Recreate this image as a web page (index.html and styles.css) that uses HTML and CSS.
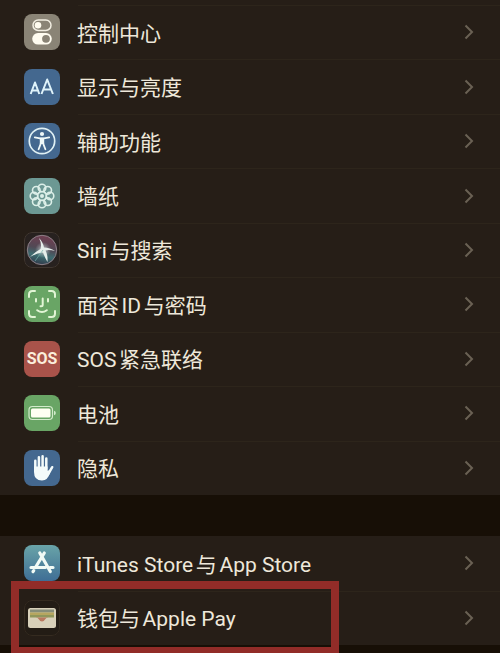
FILE: index.html
```html
<!DOCTYPE html>
<html lang="zh-CN">
<head>
    <meta charset="UTF-8">
    <meta name="viewport" content="width=device-width, initial-scale=1.0">
    <title>设置</title>
    <link rel="stylesheet" href="styles.css">
</head>
<body>
    <svg width="0" height="0" class="defs" aria-hidden="true">
        <symbol id="chevron" viewBox="0 0 10 16">
            <path d="M1.5 1.5 8 8l-6.5 6.5" fill="none" stroke="currentColor" stroke-width="2"/>
        </symbol>
    </svg>
    <main class="settings">
        <ul class="group group-main">
            <li><a class="row" href="#control">
                <svg class="icon gray" viewBox="0 0 36 36">
                    <rect x="9" y="6" width="18" height="10.4" rx="5.2" fill="none" stroke="#f2eee2" stroke-width="1.5"/>
                    <circle cx="14" cy="11.2" r="3.3" fill="#fffcf0"/>
                    <rect x="8.2" y="19" width="19.6" height="11.6" rx="5.8" fill="#fffcf0"/>
                    <circle cx="22" cy="24.8" r="3.9" fill="#8a8476"/>
                </svg>
                <span class="label">控制中心</span>
                <svg class="chevron"><use href="#chevron"/></svg>
            </a></li>
            <li><a class="row" href="#display">
                <svg class="icon blue" viewBox="0 0 36 36">
                    <path d="M6.7 25 11 13.5 15.3 25M8.2 21.5H13.8M17.5 25 23.2 10.5 28.9 25M19.3 20.5H27.1" fill="none" stroke="#dff3fa" stroke-width="2" stroke-linejoin="round"/>
                </svg>
                <span class="label">显示与亮度</span>
                <svg class="chevron"><use href="#chevron"/></svg>
            </a></li>
            <li><a class="row" href="#accessibility">
                <svg class="icon blue" viewBox="0 0 36 36">
                    <circle cx="18" cy="18" r="12.7" fill="none" stroke="#dff0f4" stroke-width="1.7"/>
                    <circle cx="18" cy="11" r="2.1" fill="#eff8f8"/>
                    <path d="M10.8 14.3 16 15.3h4l5.2-1M17 16v4l-2.4 6.2M19 16v4l2.4 6.2" fill="none" stroke="#eff8f8" stroke-width="1.8" stroke-linecap="round"/>
                    <path d="M15.8 14.8h4.4v6.2h-4.4z" fill="#eff8f8"/>
                </svg>
                <span class="label">辅助功能</span>
                <svg class="chevron"><use href="#chevron"/></svg>
            </a></li>
            <li><a class="row" href="#wallpaper">
                <svg class="icon teal" viewBox="0 0 36 36">
                    <g fill="none" stroke="#dcefe8" stroke-width="1.6">
                        <circle cx="18" cy="10" r="3.8"/>
                        <circle cx="23.7" cy="12.3" r="3.8"/>
                        <circle cx="26" cy="18" r="3.8"/>
                        <circle cx="23.7" cy="23.7" r="3.8"/>
                        <circle cx="18" cy="26" r="3.8"/>
                        <circle cx="12.3" cy="23.7" r="3.8"/>
                        <circle cx="10" cy="18" r="3.8"/>
                        <circle cx="12.3" cy="12.3" r="3.8"/>
                        <circle cx="18" cy="18" r="4.5"/>
                    </g>
                    <circle cx="18" cy="18" r="2" fill="#dcefe8"/>
                </svg>
                <span class="label">墙纸</span>
                <svg class="chevron"><use href="#chevron"/></svg>
            </a></li>
            <li><a class="row" href="#siri">
                <svg class="icon" viewBox="0 0 36 36">
                    <defs>
                        <linearGradient id="orb" x1=".6" y1="0" x2=".4" y2="1">
                            <stop offset="0" stop-color="#713d50"/>
                            <stop offset=".45" stop-color="#514955"/>
                            <stop offset=".7" stop-color="#3e6c70"/>
                            <stop offset="1" stop-color="#303a4a"/>
                        </linearGradient>
                        <radialGradient id="glow">
                            <stop offset="0" stop-color="#fff"/>
                            <stop offset="1" stop-color="#c8e0de" stop-opacity="0"/>
                        </radialGradient>
                    </defs>
                    <rect x=".5" y=".5" width="35" height="35" rx="7.5" fill="#27211f" stroke="#403730"/>
                    <circle cx="18" cy="18" r="14.7" fill="url(#orb)" stroke="#8d8088"/>
                    <circle cx="19" cy="18" r="8" fill="url(#glow)" opacity=".7"/>
                    <path d="M15 6Q19 10 20 15.5Q26 15.5 31 19Q25 17.5 21.5 18.5Q24 23 23.5 30Q20.5 25 19 20.5Q13 21 6 25Q11 20 16.5 17Q18 12 15 6Z" fill="#e5eeea"/>
                    <path d="M19 18 11 29" stroke="#73afa8" opacity=".7"/>
                </svg>
                <span class="label">Siri与搜索</span>
                <svg class="chevron"><use href="#chevron"/></svg>
            </a></li>
            <li><a class="row" href="#faceid">
                <svg class="icon green" viewBox="0 0 36 36">
                    <g fill="none" stroke="#e2f5d5" stroke-width="2" stroke-linecap="round">
                        <path d="M5 11V8.5Q5 5 8.5 5H11M25 5h2.5Q31 5 31 8.5V11M31 25v2.5Q31 31 27.5 31H25M11 31H8.5Q5 31 5 27.5V25"/>
                        <path d="M12 13v2.5M24 13v2.5M18.7 12.5v6.2q0 1.5-1.5 1.5h-.7M13.2 24.2q4.8 3.6 9.6 0"/>
                    </g>
                </svg>
                <span class="label">面容ID与密码</span>
                <svg class="chevron"><use href="#chevron"/></svg>
            </a></li>
            <li><a class="row" href="#sos">
                <span class="icon red sos">SOS</span>
                <span class="label">SOS紧急联络</span>
                <svg class="chevron"><use href="#chevron"/></svg>
            </a></li>
            <li><a class="row" href="#battery">
                <svg class="icon green" viewBox="0 0 36 36">
                    <rect x="5" y="11.5" width="23.5" height="13" rx="3.5" fill="none" stroke="#d3ebcb" stroke-width="1.2"/>
                    <rect x="7" y="13.5" width="19.5" height="9" rx="1.5" fill="#fffff2"/>
                    <path d="M30 15.7q1.8.6 1.8 2.3T30 20.3z" fill="#d3ebcb"/>
                </svg>
                <span class="label">电池</span>
                <svg class="chevron"><use href="#chevron"/></svg>
            </a></li>
            <li><a class="row" href="#privacy">
                <svg class="icon blue" viewBox="0 0 36 36">
                    <path d="M11.3 20V10.8M14.9 18V7.3M18.6 18V6.2M22.3 19V8.4M24.5 23.5 28.2 17.2" stroke="#f4fbfa" stroke-width="2.5" stroke-linecap="round"/>
                    <path d="M10 16.5H23.5V20.5H25.5L26.2 22.5Q23.8 30.5 18 30.5Q10 30.5 10 22Z" fill="#f4fbfa"/>
                </svg>
                <span class="label">隐私</span>
                <svg class="chevron"><use href="#chevron"/></svg>
            </a></li>
        </ul>

        <ul class="group group-store">
            <li><a class="row" href="#store">
                <svg class="icon store" viewBox="0 0 36 36">
                    <path d="M15.8 8 26.3 26.5M20.3 8 11.4 22.5M7 22.5H21.2M26 22.5H29M9.7 25.6 9 26.7" stroke="#f1faf5" stroke-width="3.2" stroke-linecap="round"/>
                </svg>
                <span class="label">iTunes Store与App Store</span>
                <svg class="chevron"><use href="#chevron"/></svg>
            </a></li>
            <li class="highlight"><a class="row" href="#wallet">
                <svg class="icon" viewBox="0 0 36 36">
                    <rect x=".5" y=".5" width="35" height="35" rx="7.5" fill="#231c15" stroke="#352b20"/>
                    <rect x="4" y="8" width="28" height="20" rx="2.5" fill="#d8d0b9"/>
                    <path d="M6 9.5h24v3H6z" fill="#858c79"/>
                    <path d="M6 12.5h24v2.5H6z" fill="#b6a65f"/>
                    <path d="M6 15h24v2.5H6z" fill="#90965b"/>
                    <path d="M11.5 17.5h13q-2.5 0-3.5 2t-3 2-3-2-3.5-2z" fill="#b9785f"/>
                </svg>
                <span class="label">钱包与Apple Pay</span>
                <svg class="chevron"><use href="#chevron"/></svg>
            </a></li>
        </ul>
    </main>
</body>
</html>
```
FILE: styles.css
```css
*, *::after {
    box-sizing: border-box;
}
body {
    margin: 0;
    background: #170f06;
    color: #eee8da;
    font-family: Roboto, "Noto Sans CJK SC", sans-serif;
    font-size: 21px;
}
.defs {
    position: absolute;
}
.settings {
    overflow: hidden;
    padding-bottom: 8px;
}
.group {
    display: grid;
    grid-auto-rows: 1fr;
    margin: 0;
    padding: 0;
    list-style: none;
    background: #261e17;
}
.group-main {
    min-height: 495px;
    padding-top: 5px;
}
.group-store {
    min-height: 109px;
    margin-top: 41px;
}
.row {
    display: flex;
    align-items: center;
    height: 100%;
    padding-left: 24px;
    color: inherit;
    text-decoration: none;
    /* divider starts at the label, not under the icon */
    background: linear-gradient(#2d251b, #2d251b) 78px 0 / 100% 1px no-repeat;
}
.group-store li:first-child .row {
    background: none;
}
.icon {
    flex: none;
    width: 36px;
    height: 36px;
    margin-right: 17px;
    border-radius: 8px;
}
.label {
    flex: 1;
    padding-top: 3px;
    line-height: 30px;
    text-autospace: normal;
}
.chevron {
    width: 10px;
    height: 16px;
    margin-right: 26px;
    color: #6a6154;
}
.gray {
    background: #8a8476;
}
.blue {
    background: #44688f;
}
.teal {
    background: #6c9893;
}
.green {
    background: #69a565;
}
.red {
    background: #a9534a;
}
.store {
    background: linear-gradient(#69a4a8, #3f6e95);
}
.sos {
    display: flex;
    align-items: center;
    justify-content: center;
    color: #fbeedb;
    font-size: 16px;
    font-weight: 700;
}
/* red frame round the wallet row */
.highlight {
    position: relative;
}
.highlight::after {
    content: "";
    position: absolute;
    top: -10px;
    bottom: -10px;
    left: 11px;
    width: 328px;
    border: 8px solid #922c28;
    pointer-events: none;
}
```
